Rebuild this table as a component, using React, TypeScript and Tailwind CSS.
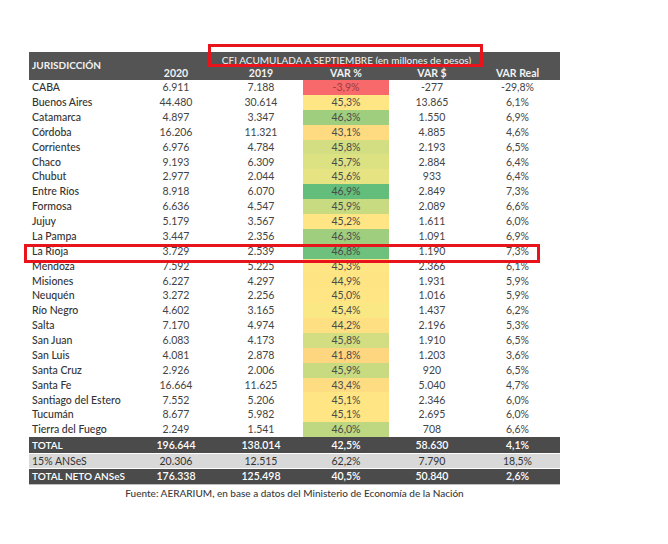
const rows: [string, string, string, string, string, string, string][] = [
  ["CABA", "6.911", "7.188", "-3,9%", "-277", "-29,8%", "#f8696b"],
  ["Buenos Aires", "44.480", "30.614", "45,3%", "13.865", "6,1%", "#ffe684"],
  ["Catamarca", "4.897", "3.347", "46,3%", "1.550", "6,9%", "#9fcf7e"],
  ["Córdoba", "16.206", "11.321", "43,1%", "4.885", "4,6%", "#fedb81"],
  ["Corrientes", "6.976", "4.784", "45,8%", "2.193", "6,5%", "#d2de81"],
  ["Chaco", "9.193", "6.309", "45,7%", "2.884", "6,4%", "#dce182"],
  ["Chubut", "2.977", "2.044", "45,6%", "933", "6,4%", "#e6e482"],
  ["Entre Ríos", "8.918", "6.070", "46,9%", "2.849", "7,3%", "#63be7b"],
  ["Formosa", "6.636", "4.547", "45,9%", "2.089", "6,6%", "#c8db80"],
  ["Jujuy", "5.179", "3.567", "45,2%", "1.611", "6,0%", "#ffe583"],
  ["La Pampa", "3.447", "2.356", "46,3%", "1.091", "6,9%", "#9fcf7e"],
  ["La Rioja", "3.729", "2.539", "46,8%", "1.190", "7,3%", "#6dc17c"],
  ["Mendoza", "7.592", "5.225", "45,3%", "2.366", "6,1%", "#ffe684"],
  ["Misiones", "6.227", "4.297", "44,9%", "1.931", "5,9%", "#ffe483"],
  ["Neuquén", "3.272", "2.256", "45,0%", "1.016", "5,9%", "#ffe583"],
  ["Río Negro", "4.602", "3.165", "45,4%", "1.437", "6,2%", "#f9e883"],
  ["Salta", "7.170", "4.974", "44,2%", "2.196", "5,3%", "#fee082"],
  ["San Juan", "6.083", "4.173", "45,8%", "1.910", "6,5%", "#d2de81"],
  ["San Luis", "4.081", "2.878", "41,8%", "1.203", "3,6%", "#fed680"],
  ["Santa Cruz", "2.926", "2.006", "45,9%", "920", "6,5%", "#c8db80"],
  ["Santa Fe", "16.664", "11.625", "43,4%", "5.040", "4,7%", "#fedc81"],
  ["Santiago del Estero", "7.552", "5.206", "45,1%", "2.346", "6,0%", "#ffe583"],
  ["Tucumán", "8.677", "5.982", "45,1%", "2.695", "6,0%", "#ffe583"],
  ["Tierra del Fuego", "2.249", "1.541", "46,0%", "708", "6,6%", "#bdd880"],
];

const totals = [
  { label: "TOTAL", v: ["196.644", "138.014", "42,5%", "58.630", "4,1%"], dark: true },
  { label: "15% ANSeS", v: ["20.306", "12.515", "62,2%", "7.790", "18,5%"], dark: false },
  { label: "TOTAL NETO ANSeS", v: ["176.338", "125.498", "40,5%", "50.840", "2,6%"], dark: true },
];

const cols = "grid grid-cols-[104px_86px_84px_86px_86px_85px]";

export default function App() {
  return (
    <div
      className="relative w-[668px] h-[544px] bg-white text-[#444444]"
      style={{ fontFamily: "Lato, 'Liberation Sans', sans-serif" }}
    >
      <div className="pt-[52px] pl-[29px] w-[560px]">
        {/* Header */}
        <div className={`${cols} grid-rows-[14px_14px] bg-[#545454] text-[#f2f2f2]`}>
          <div className="row-span-2 flex items-center pl-[3px] text-[10px] font-bold pb-[1px]">
            JURISDICCIÓN
          </div>
          <div className="col-span-5 flex items-center justify-center text-[10px] leading-none pt-[2px]">
            CFI ACUMULADA A SEPTIEMBRE (en millones de pesos)
          </div>
          {["2020", "2019", "VAR %", "VAR $", "VAR Real"].map((h) => (
            <div key={h} className="flex items-center justify-center text-[10.5px] font-bold leading-none">
              {h}
            </div>
          ))}
        </div>

        {/* Data */}
        {rows.map(([name, a, b, pct, d, real, color]) => (
          <div key={name} className={`${cols} h-[14.875px] text-[10.5px] leading-none`}>
            <div className="flex items-center pl-[3px] font-medium text-[#333333] whitespace-nowrap">{name}</div>
            <div className="flex items-center justify-center">{a}</div>
            <div className="flex items-center justify-center">{b}</div>
            <div
              className={`flex items-center justify-center ${name === "CABA" ? "text-[#9e3b3d]" : "text-[#4a4a4a]"}`}
              style={{ backgroundColor: color }}
            >
              {pct}
            </div>
            <div className="flex items-center justify-center">{d}</div>
            <div className="flex items-center justify-center">{real}</div>
          </div>
        ))}

        {/* Totals */}
        <div className="border-b border-[#bfbfbf]">
          {totals.map((t, i) => (
            <div
              key={t.label}
              className={`${cols} h-[15.5px] text-[10.5px] leading-none ${i > 0 ? "border-t border-white" : ""} ${
                t.dark ? "bg-[#4b4b4b] text-white" : "bg-[#d9d9d9] text-[#333333]"
              }`}
            >
              <div className={`flex items-center pl-[3px] whitespace-nowrap ${t.dark ? "font-semibold text-[10px]" : ""}`}>
                {t.label}
              </div>
              {t.v.map((v, j) => (
                <div key={j} className={`flex items-center justify-center ${t.dark ? "font-semibold" : ""}`}>
                  {v}
                </div>
              ))}
            </div>
          ))}
        </div>

        <p className="text-center text-[10px] font-medium text-[#3a3a3a] mt-[1px]">
          Fuente: AERARIUM, en base a datos del Ministerio de Economía de la Nación
        </p>
      </div>

      {/* highlight boxes */}
      <div className="absolute left-[208px] top-[44px] w-[275px] h-[23px] border-[3px] border-[#e8141c]" />
      <div className="absolute left-[24px] top-[244px] w-[516px] h-[19px] border-[3px] border-[#e8141c]" />
    </div>
  );
}
